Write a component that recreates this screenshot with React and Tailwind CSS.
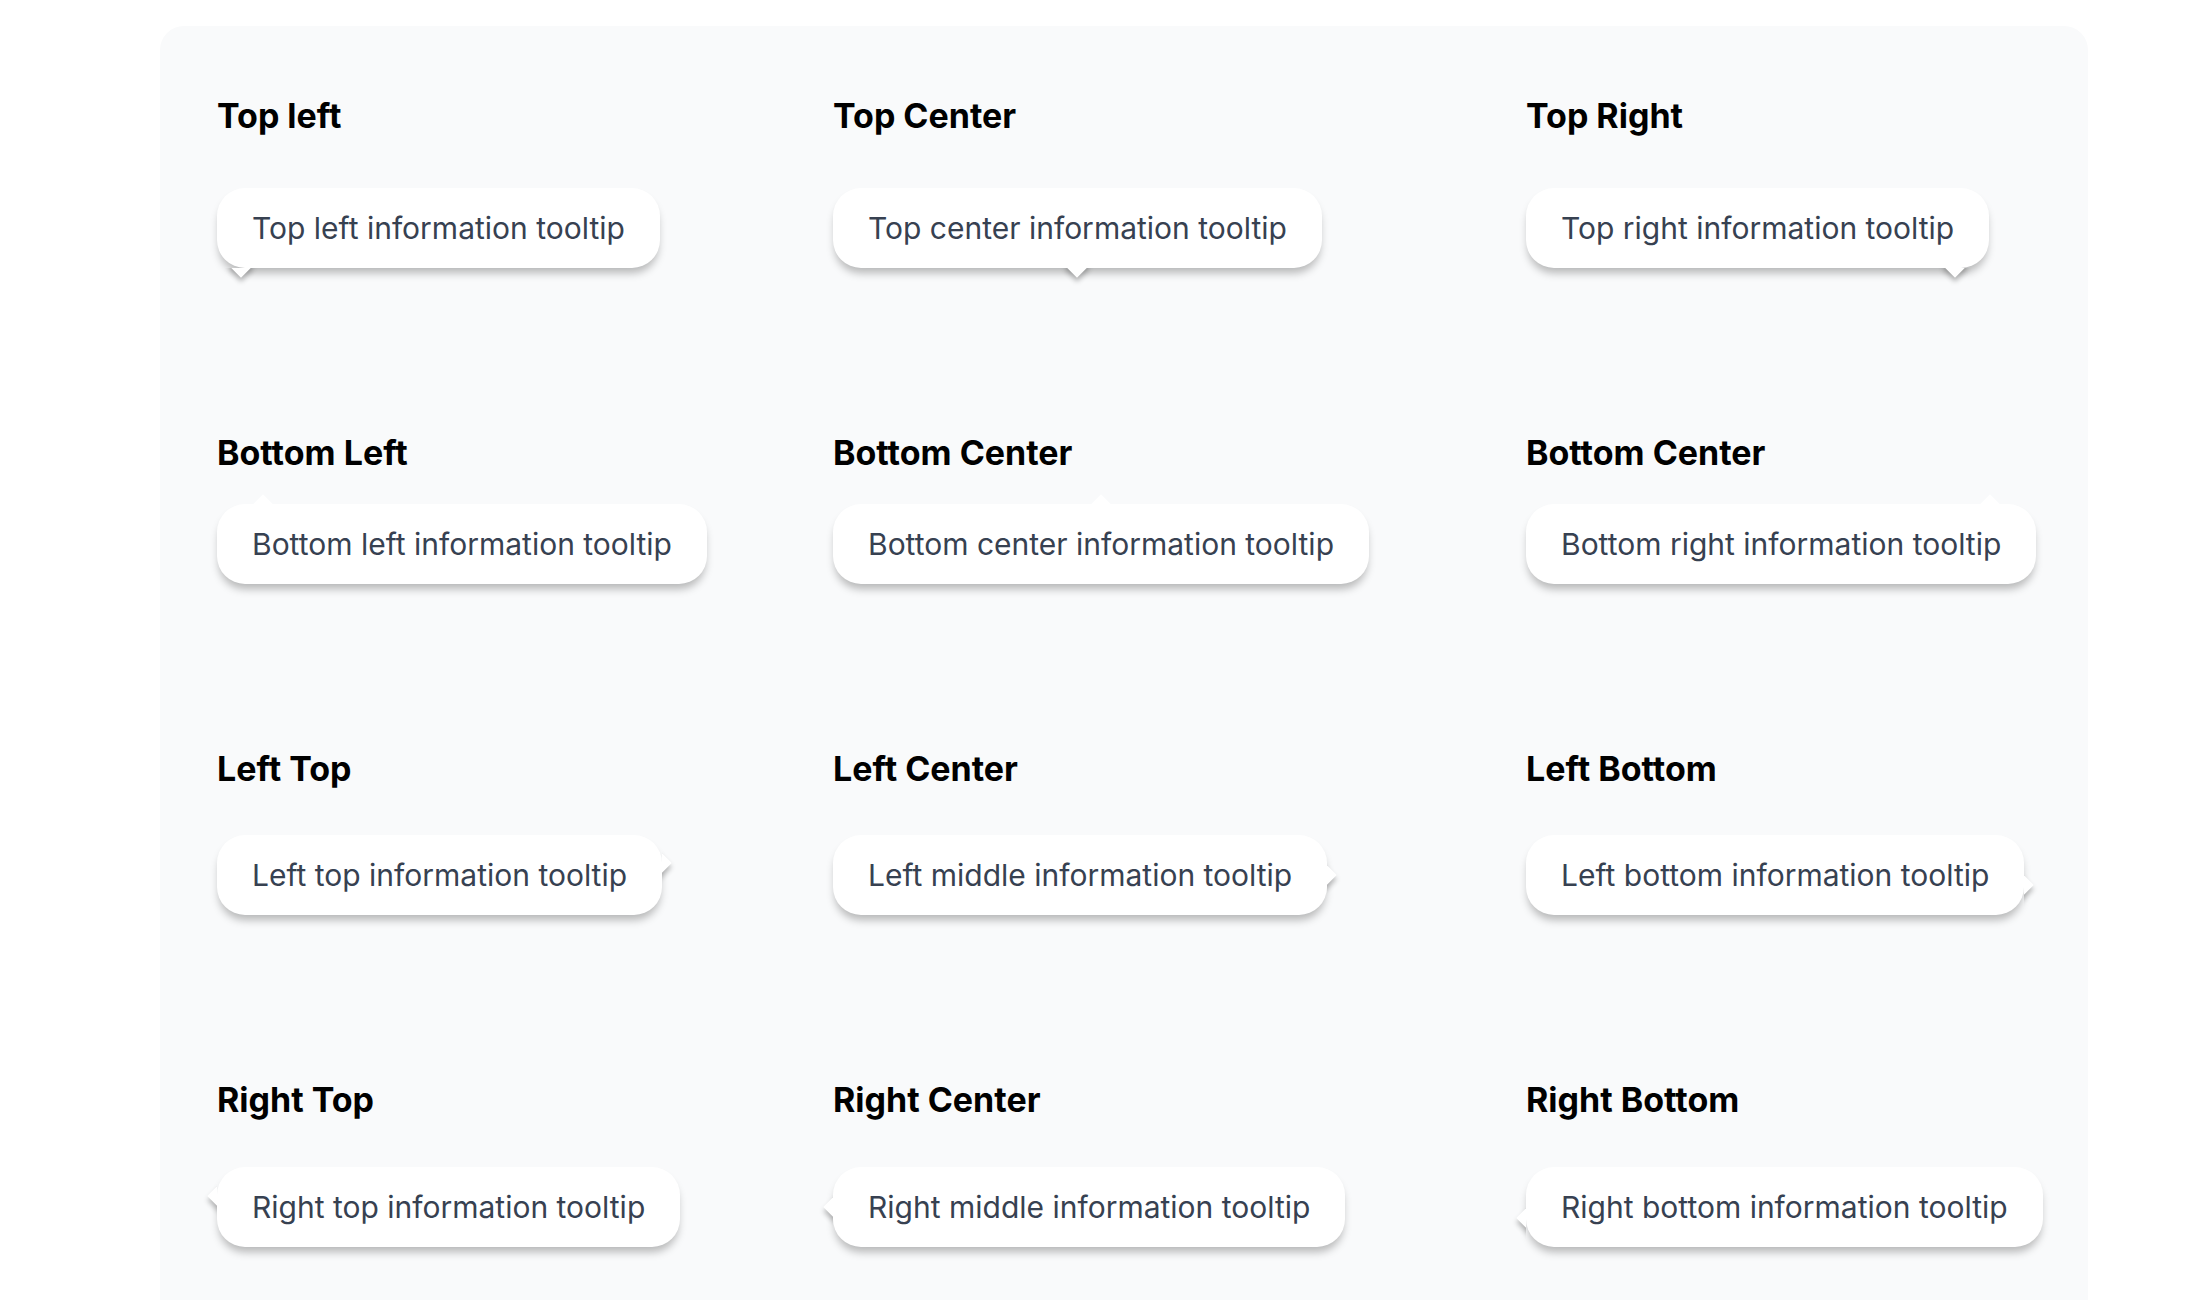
import React from "react";

const SH = "shadow-[3px_3px_5px_rgba(0,0,0,0.25)]";

function Arrow({ wrap, inner, shadow = true }) {
  return (
    <div className={`pointer-events-none absolute overflow-hidden ${wrap}`}>
      <div className={`absolute h-[18px] w-[18px] rotate-45 bg-white ${inner} ${shadow ? SH : ""}`} />
    </div>
  );
}

const ARROWS = {
  bl: { wrap: "top-full left-[6px] h-[24px] w-[36px]", inner: "left-[9px] top-[-12px]" },
  bc: { wrap: "top-full left-1/2 -translate-x-1/2 h-[24px] w-[36px]", inner: "left-[9px] top-[-12px]" },
  br: { wrap: "top-full right-[16px] h-[24px] w-[36px]", inner: "left-[9px] top-[-12px]" },
  tl: { wrap: "bottom-full left-[28px] h-[14px] w-[36px]", inner: "left-[9px] top-[8px]", shadow: false },
  tc: { wrap: "bottom-full left-1/2 -translate-x-1/2 h-[14px] w-[36px]", inner: "left-[9px] top-[8px]", shadow: false },
  tr: { wrap: "bottom-full right-[28px] h-[14px] w-[36px]", inner: "left-[9px] top-[8px]", shadow: false },
  rt: { wrap: "left-full top-[10px] h-[40px] w-[18px]", inner: "left-[-12px] top-[9px]" },
  rc: { wrap: "left-full top-1/2 -translate-y-[18px] h-[40px] w-[18px]", inner: "left-[-12px] top-[9px]" },
  rb: { wrap: "left-full bottom-[8px] h-[40px] w-[18px]", inner: "left-[-12px] top-[9px]" },
  lt: { wrap: "right-full top-[11px] h-[40px] w-[16px]", inner: "left-[10px] top-[9px]" },
  lc: { wrap: "right-full top-1/2 -translate-y-[18px] h-[40px] w-[16px]", inner: "left-[10px] top-[9px]" },
  lb: { wrap: "right-full bottom-[7px] h-[40px] w-[16px]", inner: "left-[10px] top-[9px]" },
};

const ROWS = [
  {
    mt: "mt-[52px]",
    items: [
      { title: "Top left", text: "Top left information tooltip", a: "bl" },
      { title: "Top Center", text: "Top center information tooltip", a: "bc" },
      { title: "Top Right", text: "Top right information tooltip", a: "br" },
    ],
  },
  {
    mt: "mt-[31px]",
    items: [
      { title: "Bottom Left", text: "Bottom left information tooltip", a: "tl" },
      { title: "Bottom Center", text: "Bottom center information tooltip", a: "tc" },
      { title: "Bottom Center", text: "Bottom right information tooltip", a: "tr" },
    ],
  },
  {
    mt: "mt-[46px]",
    items: [
      { title: "Left Top", text: "Left top information tooltip", a: "rt" },
      { title: "Left Center", text: "Left middle information tooltip", a: "rc" },
      { title: "Left Bottom", text: "Left bottom information tooltip", a: "rb" },
    ],
  },
  {
    mt: "mt-[47px]",
    items: [
      { title: "Right Top", text: "Right top information tooltip", a: "lt" },
      { title: "Right Center", text: "Right middle information tooltip", a: "lc" },
      { title: "Right Bottom", text: "Right bottom information tooltip", a: "lb" },
    ],
  },
];

function Cell({ item, mt }) {
  const ar = ARROWS[item.a];
  return (
    <div className="flex flex-col items-start">
      <h3 className="text-[34px] font-bold leading-[40px] text-black">{item.title}</h3>
      <div
        className={`relative ${mt} flex h-[80px] items-center rounded-[28px] bg-white px-[35px] shadow-[0_7px_9px_-2px_rgba(0,0,0,0.27)]`}
      >
        <span className="whitespace-nowrap text-[30px] leading-[36px] text-[#374151]">{item.text}</span>
        <Arrow wrap={ar.wrap} inner={ar.inner} shadow={ar.shadow !== false} />
      </div>
    </div>
  );
}

export default function App() {
  return (
    <div
      className="min-h-screen w-full overflow-hidden bg-white pt-[26px]"
      style={{ fontFamily: "Inter, 'Noto Sans', sans-serif" }}
    >
      <div className="ml-[160px] w-[1928px] rounded-[24px] bg-[#f9fafb] pb-[80px] pl-[57px] pt-[70px]">
        <div className="grid grid-cols-[616px_693px_1fr] gap-y-[165px]">
          {ROWS.map((row, ri) =>
            row.items.map((item, ci) => <Cell key={`${ri}-${ci}`} item={item} mt={row.mt} />)
          )}
        </div>
      </div>
    </div>
  );
}
